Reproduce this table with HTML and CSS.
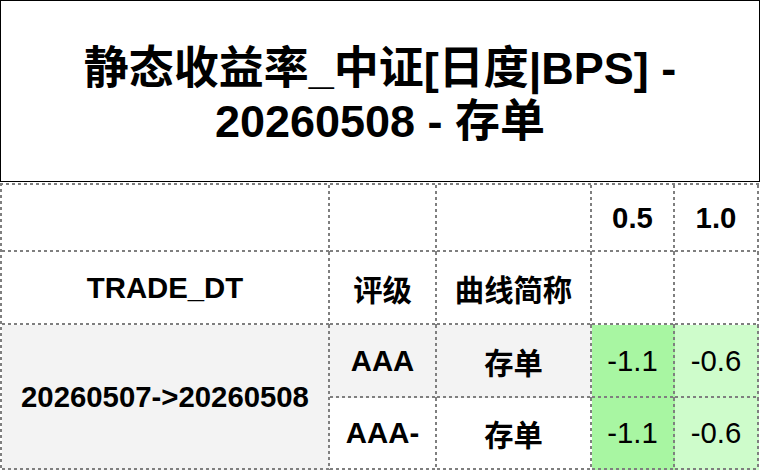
FILE: index.html
```html
<!DOCTYPE html>
<html lang="zh-CN">
<head>
<meta charset="utf-8">
<title>静态收益率</title>
<link rel="stylesheet" href="styles.css">
</head>
<body>
<div class="page">
  <div class="title"><h1>静态收益率_中证[日度|BPS] - 20260508 - 存单</h1></div>
  <div class="grid">
    <div class="c"></div>
    <div class="c"></div>
    <div class="c"></div>
    <div class="c b">0.5</div>
    <div class="c b">1.0</div>

    <div class="c b">TRADE_DT</div>
    <div class="c b">评级</div>
    <div class="c b">曲线简称</div>
    <div class="c"></div>
    <div class="c"></div>

    <div class="c b gray span2">20260507-&gt;20260508</div>
    <div class="c b gray">AAA</div>
    <div class="c b gray">存单</div>
    <div class="c g1">-1.1</div>
    <div class="c g2">-0.6</div>

    <div class="c b">AAA-</div>
    <div class="c b">存单</div>
    <div class="c g1">-1.1</div>
    <div class="c g2">-0.6</div>
  </div>
</div>
</body>
</html>
```
FILE: styles.css
```css
html, body {
  margin: 0;
  padding: 0;
  background: #ffffff;
}
body {
  font-family: "Liberation Sans", "Noto Sans CJK SC", sans-serif;
  color: #000;
}
.page {
  width: 760px;
}
.title {
  box-sizing: border-box;
  width: 760px;
  height: 182px;
  border: 1px solid #000;
  display: flex;
  align-items: center;
  justify-content: center;
  padding: 8px 50px 0;
}
.title h1 {
  margin: 0;
  font-size: 45px;
  line-height: 53px;
  font-weight: bold;
  text-align: center;
}
.grid {
  margin-top: 1px;
  width: 759px;
  box-sizing: border-box;
  display: grid;
  grid-template-columns: 328px 107px 155px 83px 84px;
  grid-template-rows: 67px 73px 73px 72px;
  padding: 2px 0 0 2px;
  background-image:
    repeating-linear-gradient(to bottom, #7f7f7f 0 3px, transparent 3px 6px),
    repeating-linear-gradient(to right, #7f7f7f 0 3px, transparent 3px 6px);
  background-size: 2px 100%, 100% 2px;
  background-position: left top, left top;
  background-repeat: no-repeat;
}
.c {
  box-sizing: border-box;
  padding: 0 2px 2px 0;
  display: flex;
  align-items: center;
  justify-content: center;
  font-size: 29.33px;
  white-space: nowrap;
  background-color: #ffffff;
  background-image:
    repeating-linear-gradient(to bottom, #7f7f7f 0 3px, transparent 3px 6px),
    repeating-linear-gradient(to right, #7f7f7f 0 3px, transparent 3px 6px);
  background-size: 2px 100%, 100% 2px;
  background-position: right top, left bottom;
  background-repeat: no-repeat;
}
.b {
  font-weight: bold;
}
.gray {
  background-color: #f3f3f3;
}
.span2 {
  grid-row: span 2;
}
.g1 {
  background-color: #a8f6a2;
}
.g2 {
  background-color: #cefccb;
}
```
